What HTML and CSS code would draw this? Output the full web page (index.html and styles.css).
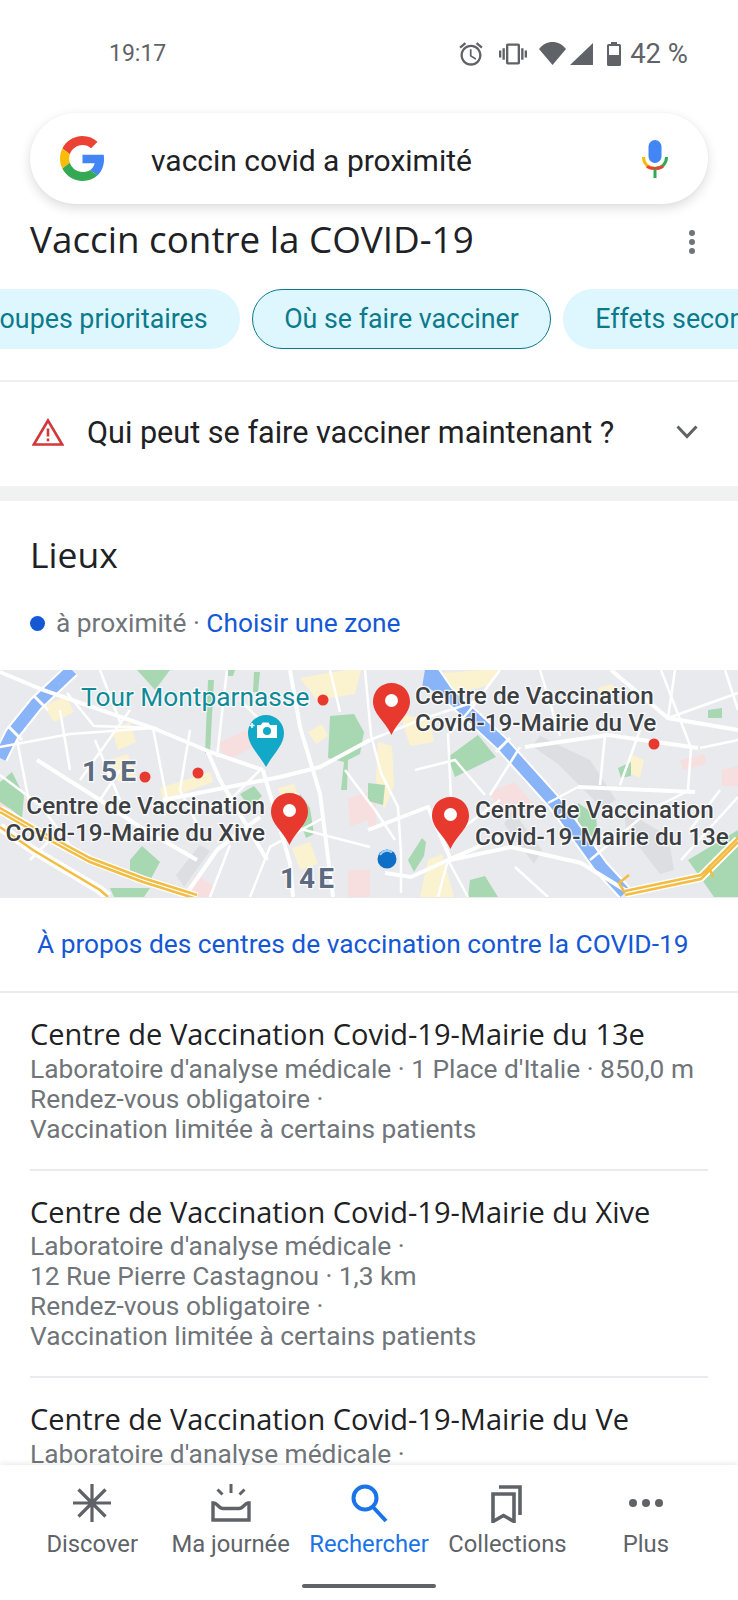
FILE: index.html
```html
<!DOCTYPE html>
<html lang="fr">
<head>
    <meta charset="UTF-8">
    <meta name="viewport" content="width=device-width, initial-scale=1.0">
    <title>vaccin covid a proximité</title>
    <link rel="stylesheet" href="styles.css">
</head>
<body>

<div class="phone">

    <div class="status-bar">
        <span class="status-time">19:17</span>
        <div class="status-icons">
            <svg class="ic-alarm" viewBox="0 0 24 24"><path d="M22 5.72l-4.6-3.86-1.29 1.53 4.6 3.86L22 5.72zM7.88 3.39L6.6 1.86 2 5.71l1.29 1.53 4.59-3.85zM12.5 8H11v6l4.75 2.85.75-1.23-4-2.37V8zM12 4c-4.97 0-9 4.03-9 9s4.03 9 9 9 9-4.03 9-9-4.03-9-9-9zm0 16c-3.87 0-7-3.13-7-7s3.13-7 7-7 7 3.13 7 7-3.13 7-7 7z"/></svg>
            <svg class="ic-vibrate" viewBox="0 0 24 24"><path d="M0 15h2V9H0v6zm3 2h2V7H3v10zm19-8v6h2V9h-2zm-3 8h2V7h-2v10zM16.5 3h-9C6.67 3 6 3.67 6 4.5v15c0 .83.67 1.5 1.5 1.5h9c.83 0 1.5-.67 1.5-1.5v-15c0-.83-.67-1.5-1.5-1.5zM16 19H8V5h8v14z"/></svg>
            <svg class="ic-wifi" viewBox="0 0 27 23"><path d="M13.5 23L0 7C3.5 2.600 8.200 0 13.500 0S23.500 2.600 27 7z"/></svg>
            <svg class="ic-signal" viewBox="0 0 23 22"><path d="M23 0v22H0z"/></svg>
            <svg class="ic-battery" viewBox="0 0 14 24"><path d="M4 0h6v2h2.500A1.500 1.500 0 0 1 14 3.500v19a1.500 1.500 0 0 1-1.500 1.500h-11A1.500 1.500 0 0 1 0 22.500v-19A1.500 1.500 0 0 1 1.500 2H4zM2 4v9h10V4z"/></svg>
            <span class="status-battery">42 %</span>
        </div>
    </div>

    <div class="search-box">
        <svg class="g-logo" viewBox="0 0 48 48">
            <path fill="#EA4335" d="M24 9.500c3.540 0 6.710 1.220 9.210 3.600l6.850-6.850C35.900 2.380 30.470 0 24 0 14.620 0 6.510 5.380 2.560 13.220l7.980 6.190C12.430 13.720 17.740 9.500 24 9.500z"/>
            <path fill="#4285F4" d="M46.980 24.550c0-1.570-.15-3.090-.38-4.550H24v9.020h12.940c-.58 2.960-2.260 5.480-4.780 7.180l7.730 6c4.510-4.180 7.090-10.360 7.090-17.650z"/>
            <path fill="#FBBC05" d="M10.530 28.590c-.48-1.450-.76-2.990-.76-4.590s.27-3.140.76-4.590l-7.980-6.190C.92 16.460 0 20.120 0 24c0 3.880.92 7.540 2.560 10.780l7.970-6.190z"/>
            <path fill="#34A853" d="M24 48c6.480 0 11.930-2.130 15.890-5.810l-7.730-6c-2.150 1.450-4.920 2.300-8.160 2.300-6.260 0-11.570-4.220-13.470-9.910l-7.980 6.190C6.510 42.620 14.620 48 24 48z"/>
        </svg>
        <span class="search-text">vaccin covid a proximité</span>
        <svg class="mic" viewBox="0 0 26 38">
            <rect x="6.500" y="0" width="13" height="23" rx="6.500" fill="#4285F4"/>
            <path d="M1.500 17c0 7 5 11.500 11.500 11.500" fill="none" stroke="#FBBC05" stroke-width="3"/>
            <path d="M24.500 17c0 7-5 11.500-11.500 11.500" fill="none" stroke="#34A853" stroke-width="3"/>
            <path d="M5 26.500c2.200 1.400 5 2 8 2s5.800-.6 8-2" fill="none" stroke="#EA4335" stroke-width="3"/>
            <rect x="11.500" y="29" width="3" height="9" fill="#34A853"/>
        </svg>
    </div>

    <div class="topic-head">
        <h1>Vaccin contre la COVID-19</h1>
        <div class="kebab"><i></i><i></i><i></i></div>
    </div>

    <div class="chips">
        <div class="chip">Groupes prioritaires</div>
        <div class="chip chip-active">Où se faire vacciner</div>
        <div class="chip">Effets secondaires</div>
    </div>

    <div class="notice">
        <svg class="warn" viewBox="0 0 32 28">
            <path d="M16 2.500L1.800 26.500h28.400z" fill="none" stroke="#d0383a" stroke-width="2.600"/>
            <rect x="14.700" y="10.500" width="2.600" height="8" fill="#d0383a"/>
            <rect x="14.700" y="20.500" width="2.600" height="2.800" fill="#d0383a"/>
        </svg>
        <span class="notice-text">Qui peut se faire vacciner maintenant ?</span>
        <svg class="chevron" viewBox="0 0 22 14"><path d="M1.500 1.500L11 11.500l9.500-10" fill="none" stroke="#5f6368" stroke-width="3"/></svg>
    </div>

    <div class="band"></div>

    <div class="places-head">
        <h2>Lieux</h2>
        <p class="nearby"><span class="blue-dot"></span>à proximité · <a>Choisir une zone</a></p>
    </div>

    <svg class="map" viewBox="0 0 738 227">
        <rect width="738" height="227" fill="#e9eaee"/>

        <g class="map-base">
            <!-- soft patches -->
            <g class="patch-yellow">
                <path d="M44 36l22-10 8 16-20 10z"/>
                <path d="M112 60l18-8 6 20-18 8z"/>
                <path d="M110 90l18-6 8 22-18 6z"/>
                <path d="M160 118l50-16 3 10-50 18z"/>
                <path d="M300 8l45-8h16l-6 24-38 6z"/>
                <path d="M308 62l14-8 6 12-12 8z"/>
                <path d="M278 118l16-4 5 14-16 4z"/>
                <path d="M292 178l18-6 8 22-18 6z"/>
                <path d="M378 72l14 4 2 40-10 24-8-30z"/>
                <path d="M400 44l30 6 4 22-24 4z"/>
                <path d="M432 4l50-4h16l-6 14-36 10z"/>
                <path d="M428 190l14-6 12 43h-34z"/>
                <path d="M630 84l14 6-4 18-14-6z"/>
                <path d="M598 18l14-4 4 8-14 6z"/>
            </g>
            <g class="patch-pink">
                <path d="M216 74l30-14 10 16-28 14z"/>
                <path d="M0 126l12-2 3 14H0z"/>
                <path d="M348 128l20-6 2 28-20 6z"/>
                <path d="M348 200h22v27h-22z"/>
                <path d="M196 204l20 14-8 9h-24z"/>
                <path d="M490 122l24-10 18 20-20 16-16-12z"/>
                <path d="M680 90l24-6 3 10-24 6z"/>
                <path d="M722 100l16-4v20h-16z"/>
                <path d="M368 128l8 0 0 28h-8z"/>
            </g>
            <g class="patch-dark">
                <path d="M540 66l50 24 26 40-14 8-44-44-26-18z"/>
                <path d="M624 140l44 26 6 34-14 4-34-44z"/>
                <path d="M176 205l24-30 10 6-26 36z"/>
                <path d="M512 140l30 40-8 14-30-40z"/>
            </g>

            <!-- parks -->
            <g class="park">
                <path d="M137 0h33l-15 20z"/>
                <path d="M208 10h6l-4 73h-5z"/>
                <path d="M254 2h6l-2 20h-5z"/>
                <path d="M228 0h7l-2 6h-5z"/>
                <path d="M330 46l24-2 10 18-4 22-12 6-1 30h-6l3-28-16-4z"/>
                <path d="M0 112l12-10 12 24-2 22-10-8-12-8z"/>
                <path d="M130 190l12-14 18 16-12 22-18-8z"/>
                <path d="M240 124l14-8 8 10-12 12z"/>
                <path d="M300 124l10 14 4 26-8 4-10-30z"/>
                <path d="M110 218h40l-6 9h-30z"/>
                <path d="M448 87l30-22 18 22-41 20z"/>
                <path d="M368 113l17 2-2 20-15-4z"/>
                <path d="M408 190l14-22 4 4-2 14-10 16z"/>
                <path d="M470 210l15-4 13 21h-30z"/>
                <path d="M578 133l18 12 2 26-20-14z"/>
                <path d="M618 98l13-6v14l-10 2z"/>
                <path d="M708 40l14-2v10h-14z"/>
                <path d="M688 190l50-30v67h-24z"/>
            </g>

            <!-- water -->
            <g class="water-case">
                <path d="M72 0L36 34 12 64 0 88"/>
                <path d="M431 0l15 22 55 51 54 60 46 64 24 26"/>
            </g>
            <g class="water">
                <path d="M72 0L36 34 12 64 0 88"/>
                <path d="M431 0l15 22 55 51 54 60 46 64 24 26"/>
                <path d="M431 0l-2 12 16 8"/>
            </g>
            <g class="water-gap">
                <path d="M34 26l14 14M8 56l14 14"/>
                <path d="M496 82l14-14M560 146l14-12"/>
            </g>

            <!-- main streets -->
            <g class="road">
                <path d="M0 2l43 18 110 38 60 25 50 17"/>
                <path d="M290 0l10 57 20 67 13 103"/>
                <path d="M263 100l27 93 3 34"/>
                <path d="M370 70l-50 27-40 10-117 23"/>
                <path d="M37 90l63 40 40 27 57 33"/>
                <path d="M207 80l13 30 47 80"/>
                <path d="M525 77l83-12 90 13"/>
                <path d="M368 160l60-23 23 53 60-13 70 16 44 27"/>
                <path d="M385 203l26 4 37-17 53-23"/>
                <path d="M578 117l117 5"/>
                <path d="M611 0l57 48 70 12"/>
                <path d="M187 223l30-43 43-33"/>
            </g>

            <!-- side streets -->
            <g class="road-thin">
                <path d="M17 70l13 67"/>
                <path d="M153 58l10 52 7 33"/>
                <path d="M227 0l-10 87"/>
                <path d="M0 77l70-13 83-6"/>
                <path d="M67 23l27 33 63 2"/>
                <path d="M371 65l10 38 17 34 3 46 0 40"/>
                <path d="M448 63l3 67"/>
                <path d="M661 0l30 78-3 42"/>
                <path d="M675 0l-7 48 70-25"/>
                <path d="M578 117l-30 16"/>
                <path d="M448 190l20 37M448 190l-10 37"/>
                <path d="M515 197l33 30"/>
                <path d="M681 190l57-63"/>
                <path d="M293 157l77 20"/>
                <path d="M0 105l40 30 30 40"/>
                <path d="M100 0l20 52"/>
                <path d="M365 0l6 65"/>
                <path d="M500 0l-30 40-20 23"/>
                <path d="M480 30l-60 20-50 20"/>
                <path d="M520 77l-30 48"/>
                <path d="M250 227l20-50 55-30"/>
                <path d="M330 0l10 42"/>
                <path d="M605 65l-5 50"/>
                <path d="M540 0l20 66"/>
                <path d="M700 78l38-8"/>
                <path d="M725 0l13 40"/>
                <path d="M120 100l-20 30"/>
                <path d="M220 140l40-40"/>
                <path d="M60 40l10 60"/>
                <path d="M95 70l25 60"/>
                <path d="M130 40l-50 70"/>
                <path d="M190 60l-10 60 20 40"/>
                <path d="M240 30l40 40"/>
                <path d="M30 190l25-25"/>
                <path d="M230 175l-20 52"/>
                <path d="M345 100l30 40 20 30"/>
                <path d="M415 100l40-10 30 35"/>
                <path d="M500 130l-40 30"/>
                <path d="M640 60l-20 55"/>
                <path d="M590 190l60-50 40-20"/>
                <path d="M720 120l-30 40"/>
            </g>

            <!-- ring road -->
            <g class="highway-case">
                <path d="M0 140l40 23 50 27 53 20 54 17"/>
                <path d="M0 157l33 23 67 40 8 7"/>
                <path d="M625 223l76-16 37-37"/>
            </g>
            <g class="highway">
                <path d="M0 138l40 23 50 27 53 20 54 17"/>
                <path d="M0 142l40 23 50 27 53 20 54 17"/>
                <path d="M0 157l33 23 67 40 8 7"/>
                <path d="M625 221l76-16 37-37"/>
                <path d="M625 225l76-16 37-37"/>
                <path d="M625 223l-6-10 10-8"/>
                <path d="M705 205l4-8 4 10"/>
            </g>
        </g>

        <!-- points -->
        <circle class="poi" cx="323" cy="30" r="5.500"/>
        <circle class="poi" cx="145" cy="107" r="5.500"/>
        <circle class="poi" cx="198" cy="103" r="5.500"/>
        <circle class="poi" cx="654" cy="74" r="5.500"/>

        <path d="M266 45c10 0 18 8 18 18 0 12-10 20-18 34-8-14-18-22-18-34 0-10 8-18 18-18z" fill="#12a8c8"/>
        <path d="M257 55h4l1.500-2.500h6l1.500 2.500h7v13h-20z" fill="#fff"/>
        <path d="M252 58v-5M249.500 55.500h5" stroke="#fff" stroke-width="1.500"/>
        <circle cx="267" cy="61" r="4" fill="#12a8c8"/>

        <text class="lbl-poi" x="81" y="36">Tour Montparnasse</text>
        <text class="lbl-area" x="82" y="111">15E</text>
        <text class="lbl-area" x="280" y="218">14E</text>

        <text class="lbl-place" x="265" y="144" text-anchor="end">Centre de Vaccination</text>
        <text class="lbl-place" x="265" y="171" text-anchor="end">Covid-19-Mairie du Xive</text>
        <text class="lbl-place" x="415" y="34">Centre de Vaccination</text>
        <text class="lbl-place" x="415" y="61">Covid-19-Mairie du Ve</text>
        <text class="lbl-place" x="475" y="148">Centre de Vaccination</text>
        <text class="lbl-place" x="475" y="175">Covid-19-Mairie du 13e</text>

        <g class="pin" transform="translate(373 13)">
            <path d="M18.500 0C29 0 37 8 37 18.500 37 31 25 38 18.500 52 12 38 0 31 0 18.500 0 8 8 0 18.500 0z"/>
            <circle cx="18.500" cy="17.500" r="6.500"/>
        </g>
        <g class="pin" transform="translate(271 123)">
            <path d="M18.500 0C29 0 37 8 37 18.500 37 31 25 38 18.500 52 12 38 0 31 0 18.500 0 8 8 0 18.500 0z"/>
            <circle cx="18.500" cy="17.500" r="6.500"/>
        </g>
        <g class="pin" transform="translate(432 127)">
            <path d="M18.500 0C29 0 37 8 37 18.500 37 31 25 38 18.500 52 12 38 0 31 0 18.500 0 8 8 0 18.500 0z"/>
            <circle cx="18.500" cy="17.500" r="6.500"/>
        </g>

        <circle cx="387" cy="189" r="9.500" fill="#0f6fc6"/>
        <path d="M380 185a8 8 0 0 1 12-2.500" stroke="#9fd0f5" stroke-width="2" fill="none"/>
    </svg>

    <a class="about-link">À propos des centres de vaccination contre la COVID-19</a>

    <div class="place-list">
        <div class="place">
            <div class="place-name">Centre de Vaccination Covid-19-Mairie du 13e</div>
            <div class="place-info">Laboratoire d'analyse médicale · 1 Place d'Italie · 850,0 m</div>
            <div class="place-info">Rendez-vous obligatoire ·</div>
            <div class="place-info">Vaccination limitée à certains patients</div>
        </div>
        <div class="place">
            <div class="place-name">Centre de Vaccination Covid-19-Mairie du Xive</div>
            <div class="place-info">Laboratoire d'analyse médicale ·</div>
            <div class="place-info">12 Rue Pierre Castagnou · 1,3 km</div>
            <div class="place-info">Rendez-vous obligatoire ·</div>
            <div class="place-info">Vaccination limitée à certains patients</div>
        </div>
        <div class="place">
            <div class="place-name">Centre de Vaccination Covid-19-Mairie du Ve</div>
            <div class="place-info">Laboratoire d'analyse médicale ·</div>
        </div>
    </div>

    <!-- Bottom navigation -->
    <nav class="bottom-nav">
        <div class="nav-items">
            <div class="nav-item">
                <svg viewBox="0 0 40 40"><path d="M20 1v38M1 20h38M6.500 6.500l27 27M33.500 6.500l-27 27" fill="none" stroke="#5f6368" stroke-width="3.200"/></svg>
                <span>Discover</span>
            </div>
            <div class="nav-item">
                <svg viewBox="0 0 40 40"><path d="M20 1v9M6.500 6.500l5 5M33.500 6.500l-5 5" fill="none" stroke="#5f6368" stroke-width="3"/><path d="M2 20v17h36V20h-1c-3 0-5 5.500-9 5.500H12C8 25.500 6 20 3 20z" fill="none" stroke="#5f6368" stroke-width="3.400"/></svg>
                <span>Ma journée</span>
            </div>
            <div class="nav-item nav-active">
                <svg viewBox="0 0 40 40"><circle cx="16" cy="15" r="11.500" fill="none" stroke="#1a73e8" stroke-width="4"/><path d="M24 24l13 14" fill="none" stroke="#1a73e8" stroke-width="4"/></svg>
                <span>Rechercher</span>
            </div>
            <div class="nav-item">
                <svg viewBox="0 0 40 40"><path d="M6 38.500V11h21v27.500l-10.500-6z" fill="none" stroke="#5f6368" stroke-width="3.600"/><path d="M12 4h21v28" fill="none" stroke="#5f6368" stroke-width="3.600"/></svg>
                <span>Collections</span>
            </div>
            <div class="nav-item">
                <svg viewBox="0 0 40 40"><circle cx="7" cy="20" r="4" fill="#5f6368"/><circle cx="20" cy="20" r="4" fill="#5f6368"/><circle cx="33" cy="20" r="4" fill="#5f6368"/></svg>
                <span>Plus</span>
            </div>
        </div>
        <div class="home-bar"></div>
    </nav>

</div>

</body>
</html>
```

FILE: styles.css
```css
/* General Styling */
* {
    margin: 0;
    padding: 0;
    box-sizing: border-box;
}

body {
    font-family: 'Roboto', 'Liberation Sans', sans-serif;
    background: #fff;
    color: #202124;
}

.phone {
    position: relative;
    width: 738px;
    height: 1600px;
    overflow: hidden;
    background: #fff;
}

/* Status bar */
.status-bar {
    height: 113px;
    padding: 37px 50px 0 109px;
    display: flex;
    justify-content: space-between;
    align-items: flex-start;
    color: #5f6368;
}

.status-time {
    font-size: 23px;
    line-height: 33px;
}

.status-icons {
    display: flex;
    align-items: center;
    height: 33px;
    fill: #5f6368;
}

.ic-alarm { width: 28px; height: 28px; margin-right: 14px; }
.ic-vibrate { width: 28px; height: 28px; margin-right: 12px; }
.ic-wifi { width: 27px; height: 23px; margin-right: 4px; }
.ic-signal { width: 23px; height: 22px; margin-right: 14px; }
.ic-battery { width: 14px; height: 24px; margin-right: 9px; }

.status-battery {
    font-size: 27.500px;
    line-height: 33px;
}

/* Search box */
.search-box {
    position: relative;
    z-index: 1;
    height: 91px;
    margin: 0 30px;
    padding: 0 40px 0 30px;
    display: flex;
    align-items: center;
    background: #fff;
    border-radius: 46px;
    box-shadow: 0 4px 12px rgba(0, 0, 0, 0.14), 0 0 2px rgba(0, 0, 0, 0.04);
}

.g-logo {
    width: 45px;
    height: 45px;
    flex: none;
}

.search-text {
    margin-left: 46px;
    margin-top: 3px;
    font-size: 30px;
    flex: 1;
}

.mic {
    width: 26px;
    height: 38px;
    flex: none;
}

/* Topic heading */
.topic-head {
    height: 85px;
    padding: 0 30px 16px 30px;
    display: flex;
    align-items: center;
    justify-content: space-between;
}

.topic-head h1 {
    font-family: 'Open Sans', sans-serif;
    font-size: 36.800px;
    font-weight: 400;
}

.kebab {
    display: flex;
    flex-direction: column;
    gap: 3px;
    margin: 6px 13px 0 0;
}

.kebab i {
    display: block;
    width: 6px;
    height: 6px;
    border-radius: 50%;
    background: #70757a;
}

/* Chips */
.chips {
    display: flex;
    gap: 12px;
    height: 60px;
    margin-left: -60px;
    white-space: nowrap;
}

.chip {
    display: flex;
    align-items: center;
    padding: 0 32.500px;
    height: 60px;
    border-radius: 30px;
    background: #def6fd;
    color: #0b7a8c;
    font-size: 26.800px;
    flex: none;
}

.chip-active {
    border: 1.5px solid #0b7a8c;
    padding: 0 31px;
}

/* Warning row */
.notice {
    height: 106px;
    margin-top: 31px;
    border-top: 2px solid #eeeff0;
    padding: 0 40px 4px 32px;
    display: flex;
    align-items: center;
}

.warn {
    width: 32px;
    height: 28px;
    flex: none;
}

.notice-text {
    margin-left: 23px;
    font-size: 30.600px;
    flex: 1;
}

.chevron {
    width: 22px;
    height: 14px;
    flex: none;
}

.band {
    height: 15px;
    background: #f0f2f2;
}

/* Places */
.places-head {
    padding: 31px 30px 0 30px;
    height: 169px;
}

.places-head h2 {
    font-family: 'Open Sans', sans-serif;
    font-size: 35.500px;
    font-weight: 400;
    line-height: 44px;
}

.nearby {
    margin-top: 30px;
    font-size: 26.300px;
    line-height: 34px;
    color: #70757a;
    display: flex;
    align-items: center;
    white-space: pre;
}

.nearby a {
    color: #1558d6;
}

.blue-dot {
    width: 15px;
    height: 15px;
    margin-right: 11px;
    border-radius: 50%;
    background: #1558d6;
}

/* Map */
.map {
    display: block;
    width: 738px;
    height: 227px;
}

.map-base { filter: blur(0.5px); }

.patch-yellow { fill: #fbf2cf; }
.patch-pink { fill: #f7dfdf; }
.patch-dark { fill: #dcdee2; }
.park { fill: #a8d8b1; }

.water path {
    fill: none;
    stroke: #8ab4f8;
    stroke-width: 12;
}

.water-case path,
.water-gap path,
.road path,
.road-thin path {
    fill: none;
    stroke: #fff;
}

.water-case path { stroke-width: 16; }
.water-gap path { stroke-width: 3; }
.road path { stroke-width: 4; }
.road-thin path { stroke-width: 2.500; }

.highway-case path {
    fill: none;
    stroke: #fff;
    stroke-width: 9;
}

.highway path {
    fill: none;
    stroke: #f2bd42;
    stroke-width: 2.500;
}

.poi { fill: #e8392e; }

.pin path { fill: #e8392e; }
.pin circle { fill: #fff; }

.map text {
    font-family: 'Roboto', sans-serif;
    paint-order: stroke;
    stroke: rgba(255, 255, 255, 0.8);
    stroke-width: 2.500px;
}

.lbl-poi {
    font-size: 26.300px;
    fill: #0f8a98;
}

.lbl-area {
    font-size: 28px;
    font-weight: 700;
    letter-spacing: 3px;
    fill: #5d6b80;
}

.lbl-place {
    font-size: 24.300px;
    font-weight: 500;
    fill: #3c4043;
}

/* Link under the map */
.about-link {
    display: block;
    height: 96px;
    border-top: 1px solid #e8eaed;
    border-bottom: 2px solid #e8eaed;
    padding: 29px 0 0 37px;
    font-size: 26.300px;
    line-height: 34px;
    color: #1558d6;
}

/* Result list */
.place-list {
    padding: 0 30px 0 30px;
}

.place {
    padding: 21px 0 25px;
    border-bottom: 2px solid #e8eaed;
}

.place-name {
    font-family: 'Open Sans', sans-serif;
    font-size: 29px;
    line-height: 39.500px;
    color: #202124;
}

.place-info {
    font-size: 26.300px;
    line-height: 30px;
    color: #70757a;
}

/* Bottom navigation */
.bottom-nav {
    position: absolute;
    left: 0;
    right: 0;
    bottom: 0;
    height: 135px;
    background: #fff;
    box-shadow: 0 -2px 5px rgba(0, 0, 0, 0.08);
}

.nav-items {
    display: flex;
    padding: 18px 23px 0;
}

.nav-item {
    flex: 1;
    display: flex;
    flex-direction: column;
    align-items: center;
    color: #5f6368;
    font-size: 23.800px;
    white-space: nowrap;
}

.nav-item svg {
    width: 40px;
    height: 40px;
}

.nav-item span {
    margin-top: 6px;
    line-height: 30px;
}

.nav-active {
    color: #1a73e8;
}

.home-bar {
    position: absolute;
    left: 302px;
    bottom: 12px;
    width: 134px;
    height: 4px;
    border-radius: 2px;
    background: #5f6368;
}
```
